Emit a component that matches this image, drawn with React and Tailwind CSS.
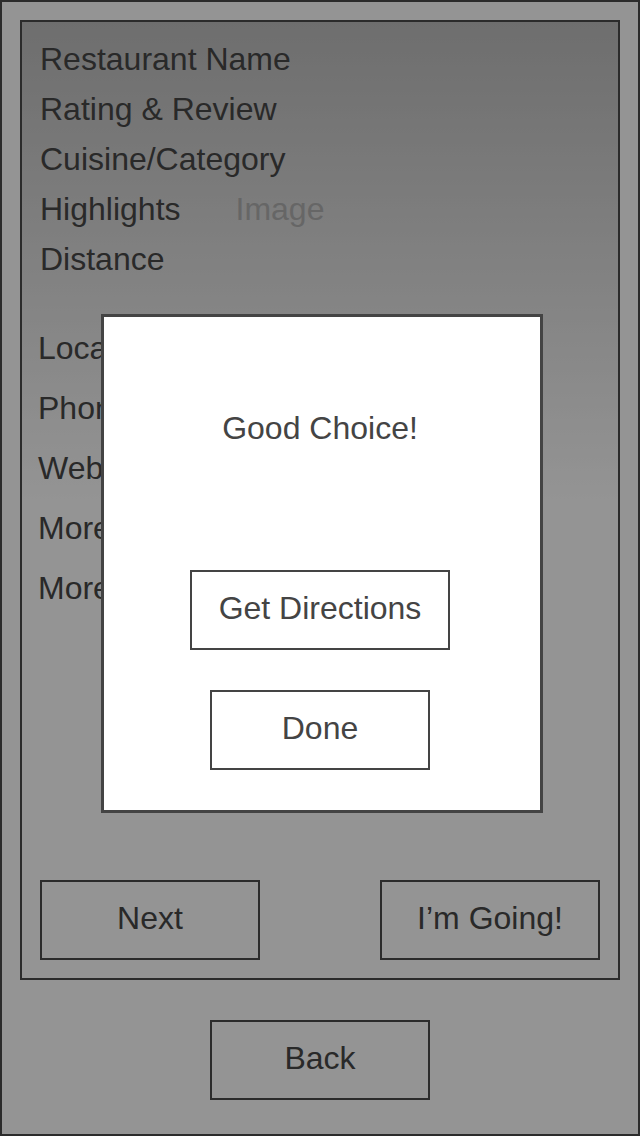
import React from "react";

const details = ["Restaurant Name", "Rating & Review", "Cuisine/Category"];
const extras = ["Location", "Phone Number", "Website", "More Info", "More Photos"];

const Box = ({ children, className = "" }) => (
  <button
    className={`flex items-center justify-center border-2 pb-1 text-[32px] leading-[40px] ${className}`}
  >
    {children}
  </button>
);

const App = () => {
  return (
    <div className="relative w-[640px] h-[1136px] overflow-hidden border-2 border-[#2b2b2b] bg-white px-[18px] pt-[18px] font-['Liberation_Sans',Arial,sans-serif] text-[#484848]">
      <div className="flex h-[960px] flex-col border-2 border-[#4a4a4a] bg-linear-to-b from-[#bebebe] to-white to-[50%]">
        <div className="pl-[18px] pt-3 text-[32px] leading-[50px]">
          {details.map((d) => (
            <div key={d}>{d}</div>
          ))}
          <div className="flex">
            <span>Highlights</span>
            <span className="ml-[55px] text-[#b0b0b0]">Image</span>
          </div>
          <div>Distance</div>
        </div>
        <div className="mt-[34px] pl-4 text-[32px] leading-[60px]">
          {extras.map((d) => (
            <div key={d}>{d}</div>
          ))}
        </div>
        <div className="mt-auto flex justify-between px-[18px] pb-[18px]">
          <Box className="h-[80px] w-[220px] border-[#4a4a4a]">Next</Box>
          <Box className="h-[80px] w-[220px] border-[#4a4a4a]">I’m Going!</Box>
        </div>
      </div>
      <div className="mt-[40px] flex justify-center">
        <Box className="h-[80px] w-[220px] border-[#4a4a4a]">Back</Box>
      </div>

      {/* modal */}
      <div className="absolute inset-0 bg-black/[0.42]">
        <div className="absolute left-[99px] top-[312px] flex h-[499px] w-[442px] flex-col items-center border-[3px] border-[#444] bg-white pr-1 text-[#444]">
          <h2 className="pt-[91px] text-[32px] leading-[40px]">Good Choice!</h2>
          <Box className="mt-[122px] h-[80px] w-[260px] border-[#444]">Get Directions</Box>
          <Box className="mt-[40px] h-[80px] w-[220px] border-[#444]">Done</Box>
        </div>
      </div>
    </div>
  );
};

export default App;
